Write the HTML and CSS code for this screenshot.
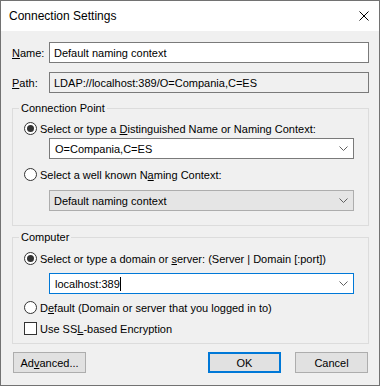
FILE: index.html
```html
<!DOCTYPE html>
<html lang="en">
<head>
  <meta charset="UTF-8" />
  <title>Connection Settings</title>
  <link rel="stylesheet" href="styles.css">
</head>
<body>

  <div class="window">
    <div class="titlebar">
      <span class="title">Connection Settings</span>
      <svg class="close" width="10" height="10" viewBox="0 0 10 10">
        <path d="M0.5 0.5 L9.5 9.5 M9.5 0.5 L0.5 9.5" stroke="#000" stroke-width="1" fill="none"/>
      </svg>
    </div>

    <div class="content">
      <div class="field-row">
        <span class="field-label"><u>N</u>ame:</span>
        <div class="textbox">Default naming context</div>
      </div>
      <div class="field-row path-row">
        <span class="field-label"><u>P</u>ath:</span>
        <div class="textbox readonly">LDAP://localhost:389/O=Compania,C=ES</div>
      </div>

      <fieldset class="group first-group">
        <legend>Connection Point</legend>
        <div class="option first-option"><span class="radio checked"></span><span>Select or type a <u>D</u>istinguished Name or Naming Context:</span></div>
        <div class="combo">
          <span>O=Compania,C=ES</span>
          <svg class="chevron" width="9" height="5" viewBox="0 0 9 5"><path d="M0.5 0.5 L4.5 4.5 L8.5 0.5" stroke="#606060" fill="none"/></svg>
        </div>
        <div class="option"><span class="radio"></span><span>Select a well known N<u>a</u>ming Context:</span></div>
        <div class="combo dropdown">
          <span>Default naming context</span>
          <svg class="chevron" width="9" height="5" viewBox="0 0 9 5"><path d="M0.5 0.5 L4.5 4.5 L8.5 0.5" stroke="#606060" fill="none"/></svg>
        </div>
      </fieldset>

      <fieldset class="group second-group">
        <legend>Computer</legend>
        <div class="option first-option"><span class="radio checked"></span><span>Select or type a domain or <u>s</u>erver: (Server | Domain [:port])</span></div>
        <div class="combo focused">
          <span>localhost:389<span class="caret"></span></span>
          <svg class="chevron" width="9" height="5" viewBox="0 0 9 5"><path d="M0.5 0.5 L4.5 4.5 L8.5 0.5" stroke="#606060" fill="none"/></svg>
        </div>
        <div class="option"><span class="radio"></span><span>D<u>e</u>fault (Domain or server that you logged in to)</span></div>
        <div class="option"><span class="checkbox"></span><span>Use SS<u>L</u>-based Encryption</span></div>
      </fieldset>

      <div class="button-row">
        <button class="btn">Ad<u>v</u>anced...</button>
        <div class="spacer"></div>
        <button class="btn default">OK</button>
        <button class="btn">Cancel</button>
      </div>
    </div>
  </div>

</body>
</html>
```

FILE: styles.css
```css
body {
  margin: 0;
  padding: 0;
  font-family: "Liberation Sans", Arial, sans-serif;
  font-size: 11px;
  color: #000;
  background-color: #f0f0f0;
}

u {
  text-underline-offset: 1px;
}

.window {
  width: 380px;
  height: 386px;
  box-sizing: border-box;
  border: 1px solid #727272;
  background-color: #f0f0f0;
  display: flex;
  flex-direction: column;
}

.titlebar {
  height: 30px;
  background-color: #fff;
  display: flex;
  align-items: center;
  justify-content: space-between;
  padding: 0 10px 0 8px;
}

.title {
  font-size: 12px;
}

.content {
  padding: 11px 10px 0 11px;
  display: flex;
  flex-direction: column;
}

.field-row {
  display: flex;
  align-items: center;
  height: 21px;
}

.path-row {
  margin-top: 9px;
}

.field-label {
  width: 37px;
}

.textbox {
  flex: 1;
  height: 21px;
  box-sizing: border-box;
  border: 1px solid #7a7a7a;
  background-color: #fff;
  padding: 0 4px;
  display: flex;
  align-items: center;
}

.textbox.readonly {
  background-color: #f0f0f0;
}

.group {
  margin: 0;
  border: 1px solid #dcdcdc;
  padding: 0 14px 14px 11px;
  min-inline-size: 0;
  display: flex;
  flex-direction: column;
}

.first-group {
  margin-top: 8px;
}

.second-group {
  margin-top: 4px;
  padding-bottom: 7px;
}

.group legend {
  padding: 0 2px;
  margin-left: -5px;
  line-height: 15px;
}

.option {
  display: flex;
  align-items: center;
  gap: 3px;
  height: 15px;
  margin-top: 8px;
}

.first-option {
  margin-top: 5px;
}

.second-group .option {
  margin-top: 6px;
}

.radio {
  width: 13px;
  height: 13px;
  box-sizing: border-box;
  border: 1px solid #333;
  border-radius: 50%;
  background-color: #fff;
  display: inline-flex;
  align-items: center;
  justify-content: center;
}

.radio.checked::after {
  content: "";
  width: 7px;
  height: 7px;
  border-radius: 50%;
  background-color: #333;
}

.checkbox {
  width: 13px;
  height: 13px;
  box-sizing: border-box;
  border: 1px solid #333;
  background-color: #fff;
}

.combo {
  margin-left: 25px;
  height: 21px;
  box-sizing: border-box;
  border: 1px solid #7a7a7a;
  background-color: #fff;
  padding: 0 5px 0 5px;
  display: flex;
  align-items: center;
  justify-content: space-between;
  margin-top: 2px;
}

.combo.dropdown {
  background-color: #e5e5e5;
  border-color: #adadad;
  padding-left: 4px;
  margin-top: 8px;
}

.combo.focused {
  border-color: #0078d7;
  margin-top: 7px;
}

.caret {
  display: inline-block;
  width: 1px;
  height: 14px;
  background-color: #000;
  vertical-align: -3px;
}

.button-row {
  display: flex;
  margin-top: 8px;
  padding: 0 1px;
}

.spacer {
  flex: 1;
}

.btn {
  width: 73px;
  height: 21px;
  box-sizing: border-box;
  background-color: #e1e1e1;
  border: 1px solid #adadad;
  font-family: "Liberation Sans", Arial, sans-serif;
  font-size: 11px;
  color: #000;
  padding: 0;
}

.btn.default {
  border: 2px solid #0078d7;
  margin-right: 14px;
}
```
